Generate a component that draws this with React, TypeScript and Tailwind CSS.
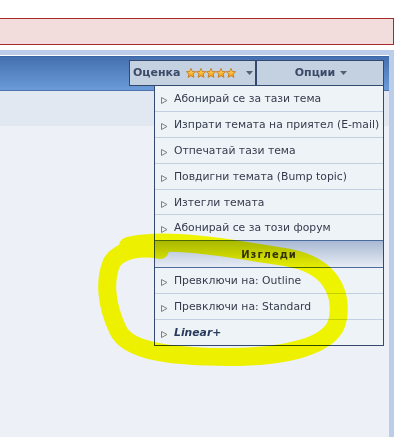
import React from 'react';

const OPTIONS = [
    { label: 'Абонирай се за тази тема', h: 'h-[26px]' },
    { label: 'Изпрати темата на приятел (E-mail)', h: 'h-[26px]' },
    { label: 'Отпечатай тази тема', h: 'h-[26px]' },
    { label: 'Повдигни темата (Bump topic)', h: 'h-[26px]' },
    { label: 'Изтегли темата', h: 'h-[25px]' },
    { label: 'Абонирай се за този форум', h: 'h-[25px]', last: true },
];

const VIEWS = ['Превключи на: Outline', 'Превключи на: Standard'];

function Arrow() {
    return (
        <svg width="7" height="7" viewBox="0 0 7 7" className="shrink-0 mt-[2px]">
            <polygon points="0.5,0.5 6,3.5 0.5,6.5" fill="none" stroke="#808080" strokeWidth="1" />
        </svg>
    );
}

function Caret() {
    return (
        <svg width="7" height="4" viewBox="0 0 7 4" className="shrink-0">
            <polygon points="0,0 7,0 3.5,4" fill="#55606e" />
        </svg>
    );
}

function Star() {
    return (
        <svg width="10" height="10" viewBox="0 0 10 10" className="shrink-0">
            <defs>
                <linearGradient id="sg" x1="0" y1="0" x2="0" y2="1">
                    <stop offset="0" stopColor="#ffe070" />
                    <stop offset="1" stopColor="#f29a12" />
                </linearGradient>
            </defs>
            <polygon
                points="5,0.4 6.3,3.5 9.6,3.7 7.1,5.9 7.9,9.4 5,7.6 2.1,9.4 2.9,5.9 0.4,3.7 3.7,3.5"
                fill="url(#sg)"
                stroke="#c77410"
                strokeWidth="0.8"
                strokeLinejoin="round"
            />
        </svg>
    );
}

export default function App() {
    return (
        <div className="relative w-[398px] h-[437px] bg-white overflow-hidden font-['DejaVu_Sans',Verdana,sans-serif] flex flex-col">
            {/* error notice */}
            <div className="mt-[18px] w-[394px] h-[27px] bg-[#f2dcdc] border border-l-0 border-[#a9292b]" />

            {/* forum frame */}
            <div className="mt-[5px] w-[394px] flex-1 bg-[#bccde9] pt-[5px] pr-[5px] flex flex-col">
                <div className="flex-1 flex flex-col border-t border-white bg-[#edf1f7]">
                    <div className="relative h-[35px] bg-gradient-to-b from-[#4570b0] to-[#6b9bd9] border-t border-[#3d66a8] border-b border-b-[#4f74ad] flex justify-end items-start pr-[5px] pt-[3px]">
                        <div className="flex h-[26px] border border-[#34496d] bg-[#c4d1e1]">
                            <div className="w-[127px] flex items-center pl-[3px] gap-[6px] border-r-2 border-[#34496d]">
                                <span className="text-[11px] font-bold text-[#3b4a66]">Оценка</span>
                                <span className="flex">
                                    <Star />
                                    <Star />
                                    <Star />
                                    <Star />
                                    <Star />
                                </span>
                                <span className="ml-[4px]">
                                    <Caret />
                                </span>
                            </div>
                            <div className="w-[126px] flex items-center justify-center gap-[5px] pl-[2px]">
                                <span className="text-[11px] font-bold text-[#3b4a66]">Опции</span>
                                <Caret />
                            </div>
                        </div>

                        {/* options menu */}
                        <div className="absolute z-10 left-[154px] top-[28px] w-[230px] bg-[#eef3f8] border border-[#34496d] flex flex-col text-[10.8px] text-[#353b4b]">
                            {OPTIONS.map((o) => (
                                <div
                                    key={o.label}
                                    className={`${o.h} flex items-center gap-[6px] pl-[6px] pt-[2px] ${o.last ? '' : 'border-b border-[#c2cfdf]'}`}
                                >
                                    <Arrow />
                                    <span className="whitespace-nowrap">{o.label}</span>
                                </div>
                            ))}
                            <div className="h-[28px] border-y border-[#4c6a9c] bg-gradient-to-b from-[#a9b9d3] to-[#e6ecf4] flex items-center justify-center">
                                <span className="text-[10px] font-bold tracking-[1px] text-[#333]">Изгледи</span>
                            </div>
                            {VIEWS.map((v) => (
                                <div key={v} className="h-[26px] flex items-center gap-[6px] pl-[6px] pt-[2px] border-b border-[#c2cfdf]">
                                    <Arrow />
                                    <span className="whitespace-nowrap">{v}</span>
                                </div>
                            ))}
                            <div className="h-[25px] flex items-center gap-[6px] pl-[6px] pt-[2px]">
                                <Arrow />
                                <span className="font-bold italic text-[#2a3a5c]">Linear+</span>
                            </div>
                        </div>
                    </div>
                    <div className="h-[35px] bg-[#e1e8f1]" />
                    <div className="flex-1" />
                </div>
            </div>

            {/* highlighter mark */}
            <svg
                className="absolute inset-0 z-20 pointer-events-none mix-blend-multiply"
                width="398"
                height="437"
                viewBox="0 0 398 437"
            >
                <path
                    d="M 128 246 C 170 236 240 250 290 258 C 330 266 342 292 338 318 C 334 348 280 357 228 357 C 175 357 128 352 118 330 C 106 305 104 280 112 262 C 120 250 140 246 160 250"
                    fill="none"
                    stroke="#ffff00"
                    strokeWidth="18"
                    strokeLinecap="round"
                    strokeLinejoin="round"
                />
            </svg>
        </div>
    );
}
